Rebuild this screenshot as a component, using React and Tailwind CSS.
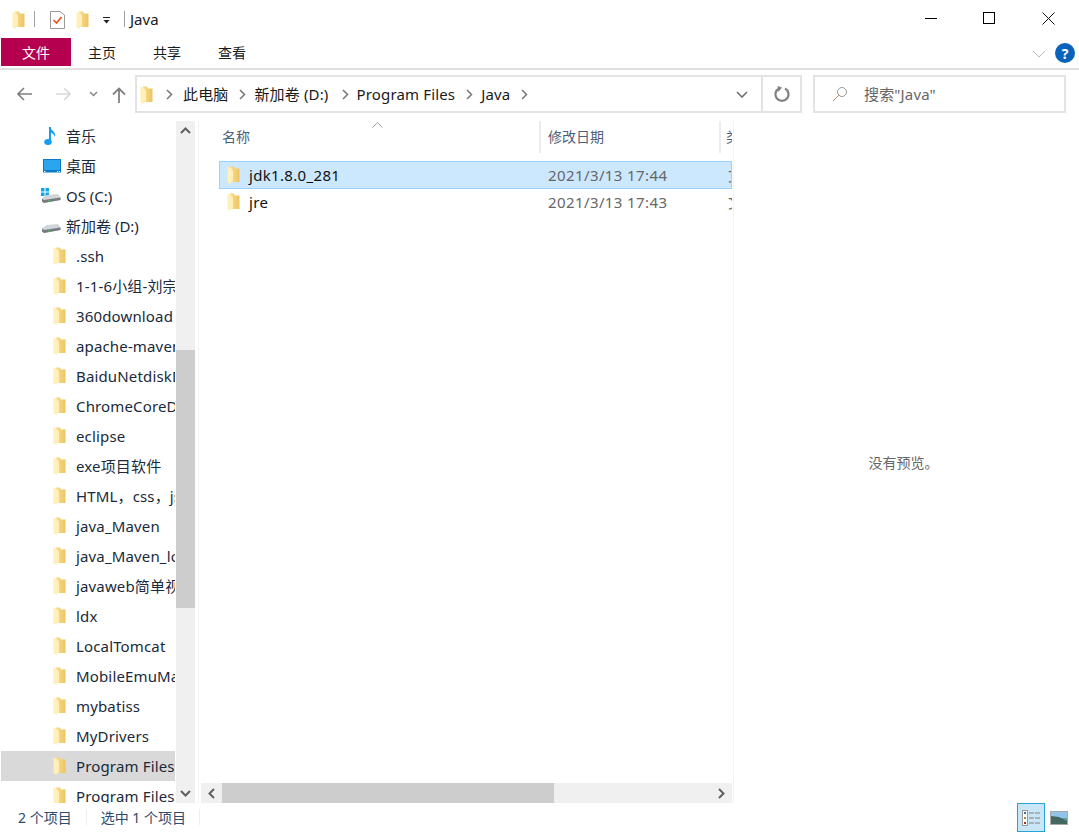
import React from "react";

const font = { fontFamily: '"Noto Sans","Noto Sans CJK SC",sans-serif' };

function Folder({ className = "" }) {
  return (
    <svg width="13" height="18" viewBox="0 0 13 18" className={"shrink-0 " + className}>
      <defs>
        <linearGradient id="fb" x1="0" x2="1" y1="0" y2="0">
          <stop offset="0" stopColor="#f9dd8e" />
          <stop offset="1" stopColor="#edc462" />
        </linearGradient>
      </defs>
      <path d="M3 0.5 H7 L8 2.5 H12.5 V16 H3 Z" fill="url(#fb)" />
      <path d="M0.5 0.5 L4.5 2.5 L6 5 V15.5 L4 16 V18 L0.5 16.5 Z" fill="#fff0ba" />
    </svg>
  );
}

function NavRow({ label, selected }) {
  return (
    <div className={"flex h-[30px] shrink-0 items-center pl-[53px] text-[15px] tracking-[0.15px] text-[#1a2a3a] whitespace-nowrap overflow-hidden " + (selected ? "bg-[#d9d9d9] ml-px" : "")}>
      <Folder className={selected ? "-ml-px" : ""} />
      <span className="ml-[10px]">{label}</span>
    </div>
  );
}

function TopRow({ icon, label }) {
  return (
    <div className="flex h-[30px] shrink-0 items-center text-[15px] text-[#1a2a3a] whitespace-nowrap">
      <div className="flex w-[66px] shrink-0 justify-end pr-[5px]">{icon}</div>
      <span>{label}</span>
    </div>
  );
}

const Drive = ({ win }) => (
  <svg width="20" height="16" viewBox="0 0 20 16">
    {win && (
      <g fill="#12a5e8">
        <rect x="0" y="0" width="3.5" height="3.5" />
        <rect x="4.5" y="0" width="3.5" height="3.5" />
        <rect x="0" y="4.5" width="3.5" height="3.5" />
        <rect x="4.5" y="4.5" width="3.5" height="3.5" />
      </g>
    )}
    <path d="M1 10.5 L6 7 L17 6 L19.5 9.5 L19.5 12 L3 15 L1 13.5 Z" fill="#d2d5d7" />
    <path d="M1 10.5 L3 12 L19.5 9.5 L19.5 12 L3 15 L1 13.5 Z" fill="#767b7f" />
    <rect x="7" y="12.5" width="2" height="1" fill="#35d04a" />
  </svg>
);

function Chevron({ className = "" }) {
  return (
    <svg width="7" height="11" viewBox="0 0 7 11" className={className}>
      <path d="M1 1 L5.5 5.5 L1 10" fill="none" stroke="#777" strokeWidth="1.5" />
    </svg>
  );
}

const navItems = [".ssh", "1-1-6小组-刘宗", "360download", "apache-maven", "BaiduNetdiskD", "ChromeCoreD", "eclipse", "exe项目软件", "HTML，css，js", "java_Maven", "java_Maven_lo", "javaweb简单视", "ldx", "LocalTomcat", "MobileEmuMa", "mybatiss", "MyDrivers"];

export default function App() {
  return (
    <div style={font} className="flex h-[833px] w-[1079px] flex-col overflow-hidden bg-white text-[#1a1a1a]">
      {/* title bar */}
      <div className="flex h-[38px] shrink-0 items-center">
        <Folder className="ml-[12px] mt-[1px]" />
        <div className="ml-[9px] h-[16px] w-px bg-[#a0a0a0]" />
        <svg width="15" height="19" viewBox="0 0 15 19" className="ml-[15px]">
          <path d="M0.5 1.5 H10 L14.5 5 V18.5 H0.5 Z" fill="#fff" stroke="#9a9a9a" />
          <path d="M3.5 10 L6.5 13 L11.5 7" fill="none" stroke="#e8501d" strokeWidth="1.6" />
        </svg>
        <Folder className="ml-[11px] mt-[1px]" />
        <svg width="8" height="7" viewBox="0 0 8 7" className="ml-[14px] mt-[3px]">
          <rect x="0" y="0" width="7" height="1" fill="#222" />
          <path d="M0.5 3 H6.5 L3.5 6.5 Z" fill="#222" />
        </svg>
        <div className="ml-[13px] h-[16px] w-px bg-[#a0a0a0]" />
        <span className="ml-[5px] text-[15px]">Java</span>
        <div className="ml-auto flex items-center">
          <div className="h-px w-[12px] bg-black mr-[46px] mt-[-2px]" />
          <div className="h-[12px] w-[12px] border border-black mr-[47px] mt-[-2px]" />
          <svg width="13" height="13" viewBox="0 0 13 13" className="mr-[24px] mt-[-2px]">
            <path d="M0.5 0.5 L12.5 12.5 M12.5 0.5 L0.5 12.5" stroke="#111" strokeWidth="1" />
          </svg>
        </div>
      </div>

      {/* ribbon tabs */}
      <div className="flex h-[32px] shrink-0 items-start border-b-2 border-[#e0e0e0]">
        <div className="ml-px flex h-[28px] w-[70px] items-center justify-center bg-[#b4004e] text-[14px] text-white">文件</div>
        <div className="ml-[16px] flex h-[28px] w-[30px] items-center justify-center text-[14px]">主页</div>
        <div className="ml-[35px] flex h-[28px] w-[30px] items-center justify-center text-[14px]">共享</div>
        <div className="ml-[35px] flex h-[28px] w-[30px] items-center justify-center text-[14px]">查看</div>
        <div className="ml-auto mr-[4px] mt-[5px] flex items-center">
          <svg width="14" height="8" viewBox="0 0 14 8" className="mr-[9px] mt-[2px]">
            <path d="M1 1 L7 7 L13 1" fill="none" stroke="#bbb" strokeWidth="1" />
          </svg>
          <div className="flex h-[20px] w-[20px] items-center justify-center rounded-full bg-[#0a63ba] text-[14px] font-bold text-white">?</div>
        </div>
      </div>

      {/* address row */}
      <div className="flex h-[51px] shrink-0 items-start pt-[5px]">
        <div className="flex h-[38px] w-[135px] items-center">
          <svg width="16" height="14" viewBox="0 0 16 14" className="ml-[17px]">
            <path d="M1 7 H15 M7 1 L1 7 L7 13" fill="none" stroke="#808080" strokeWidth="1.6" />
          </svg>
          <svg width="16" height="14" viewBox="0 0 16 14" className="ml-[22px]">
            <path d="M1 7 H15 M9 1 L15 7 L9 13" fill="none" stroke="#d8d8d8" strokeWidth="1.6" />
          </svg>
          <svg width="9" height="6" viewBox="0 0 9 6" className="ml-[18px]">
            <path d="M1 1 L4.5 4.5 L8 1" fill="none" stroke="#888" strokeWidth="1.5" />
          </svg>
          <svg width="14" height="16" viewBox="0 0 14 16" className="ml-[14px] mt-[1px]">
            <path d="M7 16 V1.5 M1 7.5 L7 1.5 L13 7.5" fill="none" stroke="#808080" strokeWidth="1.8" />
          </svg>
        </div>
        <div className="flex h-[38px] w-[667px] items-center border-2 border-[#e3e3e3] text-[15px] tracking-[0.15px]">
          <Folder className="ml-[3px] mt-[1px]" />
          <Chevron className="ml-[13px]" />
          <span className="ml-[10px]">此电脑</span>
          <Chevron className="ml-[11px]" />
          <span className="ml-[8px]">新加卷 (D:)</span>
          <Chevron className="ml-[13px]" />
          <span className="ml-[8px]">Program Files</span>
          <Chevron className="ml-[11px]" />
          <span className="ml-[8px]">Java</span>
          <Chevron className="ml-[11px]" />
          <svg width="12" height="7" viewBox="0 0 12 7" className="ml-auto mr-[13px]">
            <path d="M1 1 L6 6 L11 1" fill="none" stroke="#707070" strokeWidth="1.6" />
          </svg>
          <div className="flex h-full w-[39px] items-center justify-center border-l-2 border-[#e3e3e3]">
            <svg width="16" height="16" viewBox="0 0 16 16">
              <path d="M5 2.6 A6.5 6.5 0 1 0 11 2.6" fill="none" stroke="#808080" strokeWidth="2.2" />
              <path d="M3.5 0 L8 1.5 L4.5 6 Z" fill="#808080" />
            </svg>
          </div>
        </div>
        <div className="ml-[11px] flex h-[38px] w-[253px] items-center border-2 border-[#e3e3e3] text-[15px] text-[#666]">
          <svg width="16" height="16" viewBox="0 0 16 16" className="ml-[17px]">
            <circle cx="10" cy="6" r="4.5" fill="none" stroke="#999" strokeWidth="1" />
            <path d="M6.8 9.2 L1 15" stroke="#c98a4a" strokeWidth="1" />
          </svg>
          <span className="ml-[16px] tracking-[0.15px]">搜索"Java"</span>
        </div>
      </div>

      {/* body */}
      <div className="flex min-h-0 flex-1">
        {/* nav pane */}
        <div className="flex h-[682px] w-[195px] shrink-0">
          <div className="flex w-[176px] shrink-0 flex-col overflow-hidden pr-px">
            <TopRow label="音乐" icon={
              <svg width="15" height="21" viewBox="0 0 15 21" className="mr-[2px]">
                <path d="M6 1 V15" stroke="#12a0ee" strokeWidth="2" />
                <ellipse cx="4" cy="16" rx="3.8" ry="3" fill="#12a0ee" />
                <path d="M6 1 C7 5 12 5 11 11 C10 8 8 7 6 6 Z" fill="#12a0ee" />
              </svg>
            } />
            <TopRow label="桌面" icon={
              <svg width="18" height="14" viewBox="0 0 18 14">
                <rect x="0" y="0" width="18" height="13.5" fill="#0c78c8" />
                <rect x="1" y="1" width="16" height="10" fill="#2ba6ee" />
                <rect x="1" y="12" width="1.5" height="1" fill="#fff" />
                <rect x="14" y="12" width="1.2" height="1" fill="#fff" />
                <rect x="16" y="12" width="1" height="1" fill="#fff" />
              </svg>
            } />
            <TopRow label="OS (C:)" icon={<Drive win />} />
            <TopRow label="新加卷 (D:)" icon={<Drive />} />
            {navItems.map((n) => <NavRow key={n} label={n} />)}
            <NavRow label="Program Files" selected />
            <NavRow label="Program Files" />
          </div>
          <div className="flex w-[19px] shrink-0 flex-col bg-[#f0f0f0]">
            <div className="flex h-[18px] shrink-0 items-center justify-center">
              <svg width="11" height="7" viewBox="0 0 11 7"><path d="M1 6 L5.5 1.5 L10 6" fill="none" stroke="#606060" strokeWidth="2" /></svg>
            </div>
            <div className="h-[211px] shrink-0" />
            <div className="h-[258px] shrink-0 bg-[#cdcdcd]" />
            <div className="flex-1" />
            <div className="flex h-[20px] shrink-0 items-center justify-center">
              <svg width="11" height="7" viewBox="0 0 11 7"><path d="M1 1 L5.5 5.5 L10 1" fill="none" stroke="#606060" strokeWidth="2" /></svg>
            </div>
          </div>
        </div>
        <div className="ml-[3px] h-[682px] w-px shrink-0 bg-[#f3f3f3]" />

        {/* file list */}
        <div className="ml-[2px] flex h-[682px] w-[531px] shrink-0 flex-col">
          <div className="relative flex h-[32px] shrink-0 text-[14px] text-[#4c607a]">
            <svg width="11" height="6" viewBox="0 0 11 6" className="absolute left-[171px] top-px">
              <path d="M0.5 5.5 L5.5 0.5 L10.5 5.5" fill="none" stroke="#a0a0a0" strokeWidth="1" />
            </svg>
            <div className="flex w-[340px] items-center pb-[2px] pl-[21px] border-r-2 border-[#ececec]">名称</div>
            <div className="flex w-[180px] items-center pb-[2px] pl-[7px] border-r-2 border-[#ececec]">修改日期</div>
            <div className="flex flex-1 items-center overflow-hidden pb-[2px] pl-[5px] whitespace-nowrap">类型</div>
          </div>
          <div className="h-[8px] shrink-0" />
          <div className="ml-[18px] flex h-[28px] shrink-0 items-center border border-[#99d1ff] bg-[#cce8ff] text-[15px] overflow-hidden whitespace-nowrap">
            <Folder className="ml-[7px]" />
            <span className="ml-[9px] w-[299px] shrink-0 text-[#111] tracking-[0.33px]">jdk1.8.0_281</span>
            <span className="text-[#666] w-[180px] shrink-0 tracking-[0.4px]">2021/3/13 17:44</span>
            <span className="text-[#666]">文</span>
          </div>
          <div className="ml-[19px] flex h-[26px] shrink-0 items-center text-[15px] overflow-hidden whitespace-nowrap">
            <Folder className="ml-[7px]" />
            <span className="ml-[9px] w-[299px] shrink-0 text-[#111] tracking-[0.33px]">jre</span>
            <span className="text-[#666] w-[180px] shrink-0 tracking-[0.4px]">2021/3/13 17:43</span>
            <span className="text-[#666]">文</span>
          </div>
          <div className="flex-1" />
          <div className="flex h-[20px] shrink-0 bg-[#f0f0f0]">
            <div className="flex w-[21px] items-center justify-center">
              <svg width="7" height="11" viewBox="0 0 7 11"><path d="M6 1 L1.5 5.5 L6 10" fill="none" stroke="#606060" strokeWidth="2" /></svg>
            </div>
            <div className="w-[332px] bg-[#cdcdcd]" />
            <div className="flex-1" />
            <div className="flex w-[21px] items-center justify-center">
              <svg width="7" height="11" viewBox="0 0 7 11"><path d="M1 1 L5.5 5.5 L1 10" fill="none" stroke="#606060" strokeWidth="2" /></svg>
            </div>
          </div>
        </div>
        <div className="ml-px h-[682px] w-px shrink-0 bg-[#f3f3f3]" />

        {/* preview */}
        <div className="flex h-[682px] flex-1 items-center justify-center pr-[6px] text-[14px] text-[#666]">
          没有预览。
        </div>
      </div>

      {/* status */}
      <div className="flex h-[28px] shrink-0 items-center text-[14px] text-[#2f4a6a]">
        <span className="ml-[18px] -mt-[4px]">2 个项目</span>
        <div className="ml-[14px] -mt-[4px] h-[16px] w-px bg-[#eeeeee]" />
        <span className="ml-[14px] -mt-[4px]">选中 1 个项目</span>
        <div className="ml-[13px] -mt-[4px] h-[16px] w-px bg-[#eeeeee]" />
        <div className="ml-auto -mt-[3px] flex h-[29px] w-[28px] items-center justify-center border border-[#2aa0d8] bg-[#c9e6f6]">
          <svg width="18" height="16" viewBox="0 0 18 16">
            <rect x="0.5" y="0.5" width="5" height="15" fill="#fff" stroke="#999" />
            <rect x="2" y="2" width="2" height="2" fill="#3a6ca8" />
            <rect x="2" y="7" width="2" height="2" fill="#a08a3a" />
            <rect x="2" y="12" width="2" height="2" fill="#b03020" />
            <path d="M7 3 H12 M13 3 H18 M7 8 H12 M13 8 H18 M7 13 H12 M13 13 H18" stroke="#808080" />
          </svg>
        </div>
        <div className="ml-[5px] mr-[11px] -mt-[3px] flex h-[14px] w-[18px] items-center justify-center border border-[#a8a8a8]">
          <svg width="16" height="12" viewBox="0 0 16 12">
            <rect width="16" height="6" fill="#8fc4ee" />
            <rect y="6" width="16" height="6" fill="#5f9c9c" />
            <path d="M0 4 L8 5 L16 9 L16 12 L0 12 Z" fill="#44685e" />
          </svg>
        </div>
      </div>
    </div>
  );
}
